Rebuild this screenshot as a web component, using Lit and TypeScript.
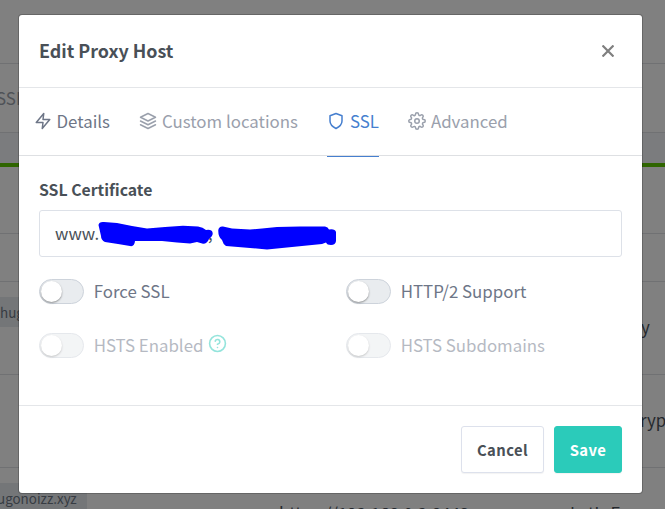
import { LitElement, html, svg, css } from "lit";
import { customElement } from "lit/decorators.js";
import { classMap } from "lit/directives/class-map.js";

const feather = (body: unknown, cls = "") => html`<svg class="icon ${cls}" viewBox="0 0 24 24" fill="none" stroke="currentColor" stroke-width="2" stroke-linecap="round" stroke-linejoin="round">${body}</svg>`;
const zap = svg`<polygon points="13 2 3 14 12 14 11 22 21 10 12 10 13 2"/>`;
const layers = svg`<polygon points="12 2 2 7 12 12 22 7 12 2"/><polyline points="2 17 12 22 22 17"/><polyline points="2 12 12 17 22 12"/>`;
const shield = svg`<path d="M12 22s8-4 8-10V5l-8-3-8 3v7c0 6 8 10 8 10z"/>`;
const gear = svg`<circle cx="12" cy="12" r="3"/><path d="M19.4 15a1.65 1.65 0 0 0 .33 1.82l.06.06a2 2 0 0 1 0 2.83 2 2 0 0 1-2.83 0l-.06-.06a1.65 1.65 0 0 0-1.82-.33 1.65 1.65 0 0 0-1 1.51V21a2 2 0 0 1-2 2 2 2 0 0 1-2-2v-.09A1.65 1.65 0 0 0 9 19.4a1.65 1.65 0 0 0-1.82.33l-.06.06a2 2 0 0 1-2.83 0 2 2 0 0 1 0-2.83l.06-.06a1.65 1.65 0 0 0 .33-1.82 1.65 1.65 0 0 0-1.51-1H3a2 2 0 0 1-2-2 2 2 0 0 1 2-2h.09A1.65 1.65 0 0 0 4.6 9a1.65 1.65 0 0 0-.33-1.82l-.06-.06a2 2 0 0 1 0-2.83 2 2 0 0 1 2.83 0l.06.06a1.65 1.65 0 0 0 1.82.33H9a1.65 1.65 0 0 0 1-1.51V3a2 2 0 0 1 2-2 2 2 0 0 1 2 2v.09a1.65 1.65 0 0 0 1 1.51 1.65 1.65 0 0 0 1.82-.33l.06-.06a2 2 0 0 1 2.83 0 2 2 0 0 1 0 2.83l-.06.06a1.65 1.65 0 0 0-.33 1.82V9a1.65 1.65 0 0 0 1.51 1H21a2 2 0 0 1 2 2 2 2 0 0 1-2 2h-.09a1.65 1.65 0 0 0-1.51 1z"/>`;
const help = svg`<circle cx="12" cy="12" r="10"/><path d="M9.09 9a3 3 0 0 1 5.83 1c0 2-3 3-3 3"/><line x1="12" y1="17" x2="12" y2="17"/>`;

@customElement("host-list")
class HostList extends LitElement {
  static styles = css`
    :host { display: flex; flex-direction: column; height: 509px; overflow: hidden; background: #808080; color: #25292e; font-size: 16.9px; line-height: 24px; }
    .row { flex: none; box-sizing: border-box; border-bottom: 1px solid #707173; display: flex; justify-content: space-between; white-space: nowrap; }
    .row > * { flex: none; }
    .top { height: 64px; }
    .nav { height: 69px; color: #4f5257; padding-top: 22px; }
    .nav span { margin-left: -4px; }
    .band { flex: none; height: 30px; background: #7b7c7e; }
    .stripe { flex: none; height: 4px; background: #2f6500; }
    .r1 { height: 67px; }
    .r2 { height: 48px; }
    .r3 { height: 93px; padding-top: 15px; }
    .r4 { height: 93px; }
    .last { height: 80px; padding-top: 15px; border: 0; justify-content: flex-start; }
    .tag { height: 30px; line-height: 30px; background: #747678; color: #373c43; font-size: 13.4px; overflow: hidden; }
    .r3 .tag { width: 40px; }
    .last .tag { width: 87px; }
    .last .tag span { margin-left: -3px; }
    .end { width: 24px; }
    .r3 .end { margin-top: 18px; }
    .r4 .end { margin-top: 33px; margin-left: auto; width: 25px; }
    .addr { margin: 18px 0 0 192px; width: 292px; }
    .cert { margin-top: 18px; margin-left: -1px; }
  `;
  render() {
    return html`
      <div class="row top"></div>
      <div class="row nav"><span>SSL</span></div>
      <div class="band"></div><div class="stripe"></div>
      <div class="row r1"></div><div class="row r2"></div>
      <div class="row r3"><div class="tag"><span>hug</span></div><div class="end">y</div></div>
      <div class="row r4"><div class="end">rypt</div></div>
      <div class="row last"><div class="tag"><span>ugonoizz.xyz</span></div><div class="addr">https://192.168.0.2:8443</div><div class="cert">Let's Encrypt</div></div>`;
  }
}

@customElement("proxy-dialog")
class ProxyDialog extends LitElement {
  static styles = css`
    :host { display: flex; flex-direction: column; box-sizing: border-box; width: 625px; height: 480px; background: #fff; background-clip: padding-box; border: 1px solid rgba(0,0,0,.2); border-radius: 4px; color: #495057; }
    .icon { flex: none; width: 18px; height: 18px; display: block; }
    header { height: 72px; border-bottom: 1px solid #e4e6e9; display: flex; align-items: center; justify-content: space-between; padding: 0 28px 0 20px; }
    h1 { margin: -2px 0 0; font-size: 17.9px; font-weight: 700; line-height: 24px; }
    .close { width: 12px; height: 12px; margin-top: -1px; stroke: #7f7f7f; stroke-width: 2.2; fill: none; }
    nav { height: 67px; border-bottom: 1px solid #dee0e3; display: flex; padding-left: 15px; gap: 29.5px; }
    .tab { position: relative; display: flex; align-items: center; gap: 4.5px; height: 67px; color: #9aa0ac; font-size: 16.85px; line-height: 24px; white-space: nowrap; }
    .tab span { margin-top: -2px; }
    .tab .icon { margin-top: -1px; }
    .tab.strong { color: #6e7687; }
    .tab.active { color: #467fcf; }
    .tab.active::after { content: ""; position: absolute; left: 0; right: 0; bottom: -2px; height: 1px; background: #467fcf; }
    main { height: 249px; box-sizing: border-box; padding: 22px 20px 0; }
    .label { font-weight: 700; font-size: 15.8px; line-height: 24px; }
    .field { position: relative; box-sizing: border-box; height: 47px; margin-top: 8px; border: 1px solid #dde1e8; border-radius: 3px; padding-left: 15px; line-height: 45px; font-size: 16.7px; display: flex; }
    .comma { margin-left: 109px; }
    .marks { position: absolute; left: 58px; top: 8px; width: 242px; height: 36px; fill: #00f; }
    .switches { display: grid; grid-template-columns: 307px 1fr; row-gap: 30px; margin-top: 22px; }
    .switch { display: flex; align-items: center; height: 24px; font-size: 16.85px; color: #6e7687; white-space: nowrap; }
    .switch span { margin-top: -2px; }
    .track { box-sizing: border-box; width: 45px; height: 25px; border: 1px solid #cdd3db; border-radius: 13px; background: #e9ecef; padding: 1px; margin-right: 9.7px; }
    .knob { width: 21px; height: 21px; border-radius: 50%; background: #fff; box-shadow: 0 1px 2px rgba(0,0,0,.4); }
    .disabled { opacity: .5; }
    .help { width: 19px; height: 19px; color: #2bcbba; margin: -3px 0 0 4.5px; }
    footer { flex: 1; border-top: 1px solid #e4e6e9; display: flex; justify-content: flex-end; gap: 10px; padding: 20px 20px 0; }
    button { box-sizing: border-box; height: 47px; padding: 0; font: inherit; font-weight: 700; font-size: 14.8px; letter-spacing: .4px; border-radius: 3px; border: 1px solid #dde1ec; background: #fff; color: #495057; width: 83px; box-shadow: 0 1px 1px rgba(0,0,0,.05); }
    .save { width: 68px; border-color: #2bcbba; background: #2bcbba; color: #fff; }
  `;
  tab(icon: unknown, text: string, classes = {}) {
    return html`<div class=${classMap({ tab: true, ...classes })}>${feather(icon)}<span>${text}</span></div>`;
  }
  toggle(text: string, disabled = false, hint = false) {
    return html`<div class=${classMap({ switch: true, disabled })}><div class="track"><div class="knob"></div></div><span>${text}</span>${hint ? feather(help, "help") : ""}</div>`;
  }
  render() {
    return html`
      <header><h1>Edit Proxy Host</h1><svg class="close" viewBox="0 0 12 12"><path d="M.5.5l11 11M11.5.5l-11 11"/></svg></header>
      <nav>${this.tab(zap, "Details", { strong: true })}${this.tab(layers, "Custom locations")}${this.tab(shield, "SSL", { active: true })}${this.tab(gear, "Advanced")}</nav>
      <main>
        <div class="label">SSL Certificate</div>
        <div class="field"><span>www.</span><span class="comma">,</span>
          <svg class="marks" viewBox="98 219 242 36">
            <path d="M98.500 225Q99 221.500 104 222L117 223 132 226 147 228.500 165 227 183 225.700 198 226.500Q203 227 206 230Q212 229 212.700 233Q213 236 209 239Q207 244 203 243.800L197 242 190 243.500 177 242.500 162 241 135 241Q134.500 247 130 246L118 244 105 242Q101 240 101 236Z"/>
            <path d="M218.300 230Q219 226 223 226.500L232 228.500 250 229.500 262 228.500 277 227 300 226.500 325 226.500Q328 227 329 229.500Q335 228.500 336 232V241Q335.500 245 331 245Q327 245 326 242.500L322 244 297 246.500 267 249.500 250 248 226 246Q223 244 222 240Q218 237 218.300 230Z"/>
          </svg>
        </div>
        <div class="switches">${this.toggle("Force SSL")}${this.toggle("HTTP/2 Support")}${this.toggle("HSTS Enabled", true, true)}${this.toggle("HSTS Subdomains", true)}</div>
      </main>
      <footer><button>Cancel</button><button class="save">Save</button></footer>`;
  }
}

@customElement("app-root")
class AppRoot extends LitElement {
  static styles = css`
    :host { display: block; position: relative; width: 665px; height: 509px; overflow: hidden; font-family: "Noto Sans CJK SC", "Noto Sans", sans-serif; }
    proxy-dialog { position: absolute; left: 18px; top: 14px; }
  `;
  render() { return html`<host-list></host-list><proxy-dialog></proxy-dialog>`; }
}
